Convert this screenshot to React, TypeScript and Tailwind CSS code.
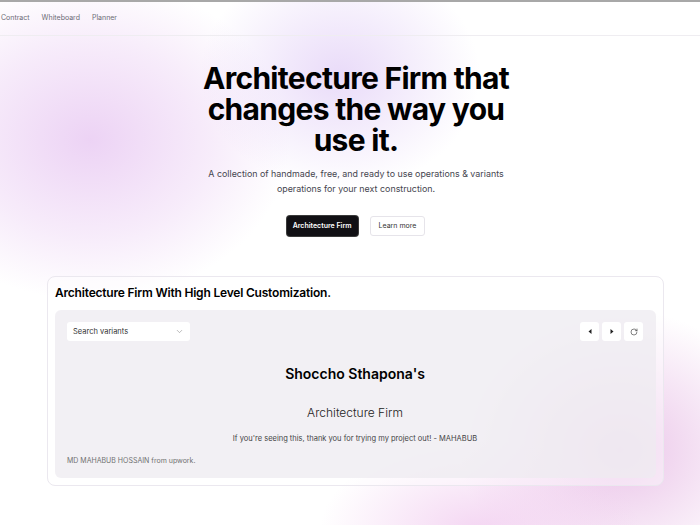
import { ChevronDown, RotateCw } from 'lucide-react'

function Blobs() {
  return (
    <div className="pointer-events-none absolute inset-0 overflow-hidden">
      <div className="absolute left-[-110px] top-[-20px] h-[320px] w-[400px] rounded-full bg-[radial-gradient(closest-side,rgba(232,200,242,0.8),rgba(232,200,242,0.35)_60%,rgba(232,200,242,0))]" />
      <div className="absolute left-[200px] top-[-40px] h-[230px] w-[280px] rounded-full bg-[radial-gradient(closest-side,rgba(224,204,246,0.7),rgba(224,204,246,0))]" />
      <div className="absolute left-[460px] top-[310px] h-[280px] w-[320px] rounded-full bg-[radial-gradient(closest-side,rgba(232,190,230,0.9),rgba(232,190,230,0))]" />
      <div className="absolute left-[320px] top-[440px] h-[180px] w-[320px] rounded-full bg-[radial-gradient(closest-side,rgba(240,200,238,0.75),rgba(240,200,238,0))]" />
    </div>
  )
}

export default function App() {
  return (
    <div className="relative h-[525px] w-[700px] overflow-hidden bg-white font-['Inter',sans-serif] text-black">
      <Blobs />
      <div className="relative">
        <nav className="flex h-[36px] items-center gap-[12px] border-b border-[#efedf1] border-t-2 border-t-[#a8a8a8] pl-[1px] text-[7px] text-[#6b6b75]">
          <span>Contract</span>
          <span>Whiteboard</span>
          <span>Planner</span>
        </nav>

        <section className="flex flex-col items-center pl-[12px] pt-[27px]">
          <h1 className="text-center text-[30px] font-bold leading-[31px] tracking-[-0.7px]">
            Architecture Firm that
            <br />
            changes the way you
            <br />
            use it.
          </h1>
          <p className="mt-[10px] text-center text-[8.9px] leading-[15px] text-[#45454f]">
            A collection of handmade, free, and ready to use operations &amp; variants
            <br />
            operations for your next construction.
          </p>
          <div className="mt-[20px] flex gap-[12px]">
            <button className="h-[20px] rounded-[3px] bg-[#111014] px-[6px] text-[7px] font-semibold text-white shadow-[0_0_0_1px_#3a3a3a]">
              Architecture Firm
            </button>
            <button className="h-[20px] rounded-[3px] border border-[#e6e4ea] bg-white px-[8px] text-[7px] text-[#333]">
              Learn more
            </button>
          </div>
        </section>

        <div className="ml-[47px] mr-[36px] mt-[40px] rounded-[8px] border border-[#ebe8ef] bg-white/40 px-[7px] pt-[8px] pb-[7px]">
          <h2 className="text-[12px] font-semibold leading-[16px] tracking-[-0.2px]">
            Architecture Firm With High Level Customization.
          </h2>
          <div className="mt-[9px] flex h-[168px] flex-col rounded-[6px] bg-[#edebf0]/75 pl-[12px] pr-[13px] pt-[12px] pb-[12px]">
            <div className="flex items-center justify-between">
              <div className="flex h-[19px] w-[123px] items-center justify-between rounded-[3px] bg-white px-[6px] text-[7.5px] text-[#333]">
                <span>Search variants</span>
                <ChevronDown className="h-[9px] w-[9px] text-[#888]" strokeWidth={1.5} />
              </div>
              <div className="flex gap-[3px]">
                <button className="flex h-[19px] w-[19px] items-center justify-center rounded-[3px] bg-white">
                  <svg width="4" height="5" viewBox="0 0 4 5"><path d="M3.5 0 L0.5 2.5 L3.5 5 Z" fill="#222" /></svg>
                </button>
                <button className="flex h-[19px] w-[19px] items-center justify-center rounded-[3px] bg-white">
                  <svg width="4" height="5" viewBox="0 0 4 5"><path d="M0.5 0 L3.5 2.5 L0.5 5 Z" fill="#222" /></svg>
                </button>
                <button className="flex h-[19px] w-[19px] items-center justify-center rounded-[3px] bg-white">
                  <RotateCw className="h-[8px] w-[8px] text-[#444]" strokeWidth={2} />
                </button>
              </div>
            </div>
            <div className="mt-[24px] text-center text-[14px] font-semibold leading-[18px]">Shoccho Sthapona's</div>
            <div className="mt-[22px] text-center text-[12px] font-light leading-[16px] text-[#222]">Architecture Firm</div>
            <div className="mt-[13px] text-center text-[7.5px] leading-[10px] text-[#444]">
              If you're seeing this, thank you for trying my project out! - MAHABUB
            </div>
            <div className="mt-auto text-[7px] leading-[10px] text-[#707070]">MD MAHABUB HOSSAIN from upwork.</div>
          </div>
        </div>
      </div>
    </div>
  )
}
